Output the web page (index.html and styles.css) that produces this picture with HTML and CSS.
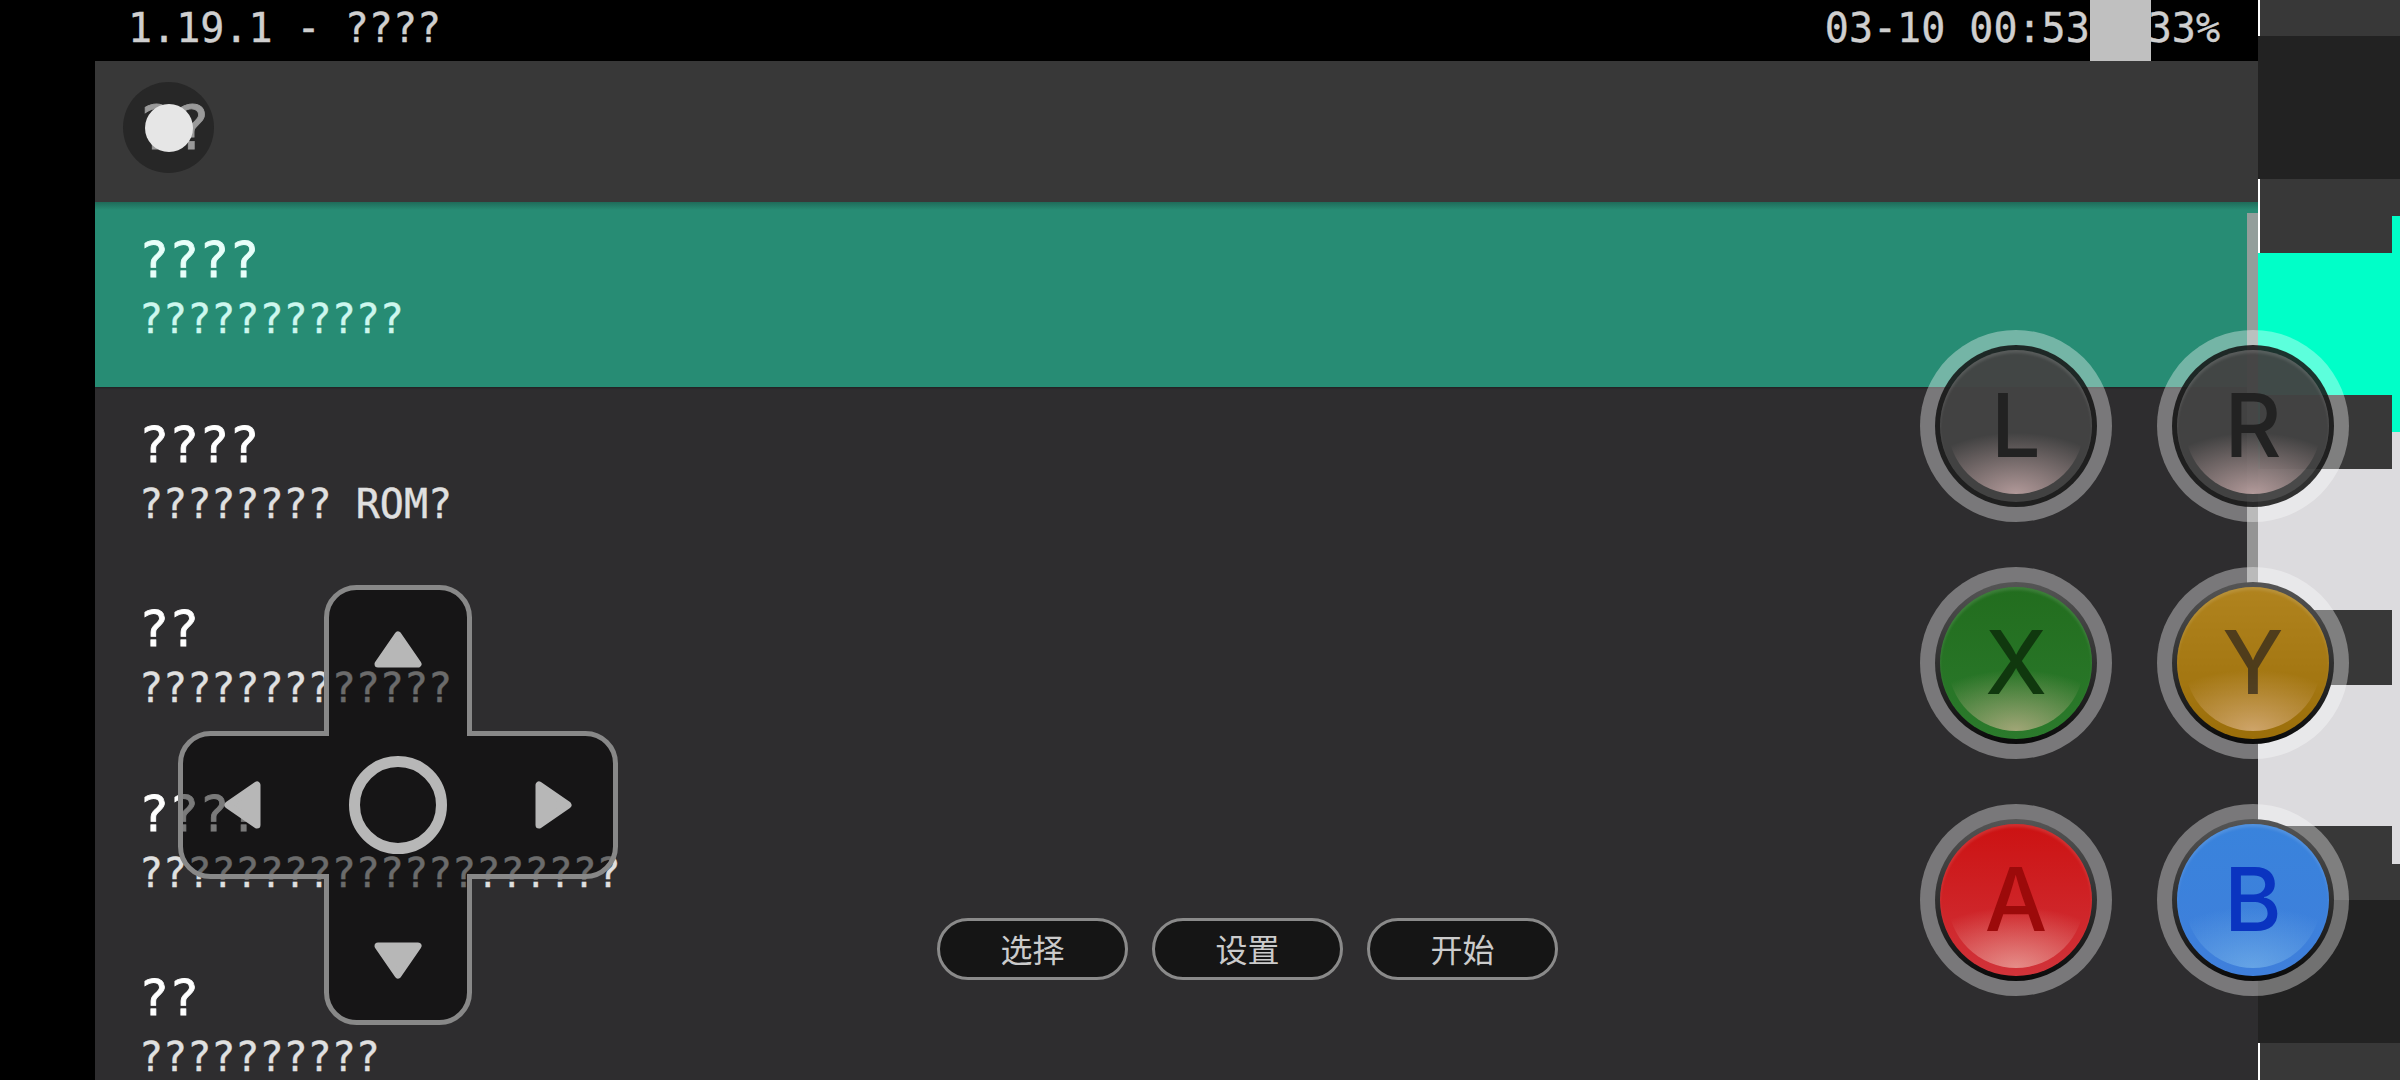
FILE: index.html
```html
<!DOCTYPE html>
<html lang="zh-CN">
<head>
    <meta charset="UTF-8">
    <meta name="viewport" content="width=device-width, initial-scale=1.0">
    <title>1.19.1</title>
    <link rel="stylesheet" href="styles.css">
</head>
<body>

<div class="screen">
    <div class="gutter"></div>

    <div class="app">
        <div class="status-bar">
            <span class="status-text">1.19.1 - ????</span>
            <div class="status-right">
                <span class="status-text">03-10 00:53</span>
                <div class="status-block"></div>
                <span class="status-text status-battery">33%</span>
            </div>
        </div>

        <div class="app-header">
            <span class="header-title">??</span>
            <div class="menu-button"><div class="menu-dot"></div></div>
        </div>

        <div class="menu-list">
            <div class="menu-item active">
                <div class="item-title">????</div>
                <div class="item-sub">???????????</div>
            </div>
            <div class="menu-item">
                <div class="item-title">????</div>
                <div class="item-sub">???????? ROM?</div>
            </div>
            <div class="menu-item">
                <div class="item-title">??</div>
                <div class="item-sub">?????????????</div>
            </div>
            <div class="menu-item">
                <div class="item-title">????</div>
                <div class="item-sub">????????????????????</div>
            </div>
            <div class="menu-item">
                <div class="item-title">??</div>
                <div class="item-sub">??????????</div>
            </div>
        </div>
    </div>

    <div class="strip">
        <div class="strip-main">
            <div class="b-mid line-white h36"></div>
            <div class="b-dark h143"></div>
            <div class="b-mid line-white h74"></div>
            <div class="b-cyan h142"></div>
            <div class="b-mid line-cyan h74"></div>
            <div class="b-light h141"></div>
            <div class="b-mid line-light h75"></div>
            <div class="b-light h141"></div>
            <div class="b-mid line-white h74"></div>
            <div class="b-dark h143"></div>
            <div class="b-mid line-white h37"></div>
        </div>
        <div class="strip-edge">
            <div class="b-mid h36"></div>
            <div class="b-dark h143"></div>
            <div class="b-mid h37"></div>
            <div class="b-cyan h216"></div>
            <div class="b-light h432"></div>
            <div class="b-mid h36"></div>
            <div class="b-dark h143"></div>
            <div class="b-mid h37"></div>
        </div>
    </div>
</div>

<div class="scrollbar"></div>

<svg class="dpad" width="446" height="446" viewBox="0 0 446 446">
    <path class="dpad-body" d="M151.5 151.5V35.5a30 30 0 0 1 30-30h83a30 30 0 0 1 30 30V151.5H410.5a30 30 0 0 1 30 30v83a30 30 0 0 1-30 30H294.5V410.5a30 30 0 0 1-30 30h-83a30 30 0 0 1-30-30V294.5H35.5a30 30 0 0 1-30-30v-83a30 30 0 0 1 30-30Z"/>
    <polygon class="dpad-arrow" points="223,53 243,82 203,82"/>
    <polygon class="dpad-arrow" points="223,393 243,364 203,364"/>
    <polygon class="dpad-arrow" points="53,223 82,203 82,243"/>
    <polygon class="dpad-arrow" points="393,223 364,203 364,243"/>
    <circle class="dpad-center" cx="223" cy="223" r="43.5"/>
</svg>

<div class="pills">
    <div class="pill">选择</div>
    <div class="pill">设置</div>
    <div class="pill">开始</div>
</div>

<div class="face-buttons">
    <div class="pad-btn btn-l"><div class="rim"><div class="face"><span>L</span></div></div></div>
    <div class="pad-btn btn-r"><div class="rim"><div class="face"><span>R</span></div></div></div>
    <div class="pad-btn btn-x"><div class="rim"><div class="face"><span>X</span></div></div></div>
    <div class="pad-btn btn-y"><div class="rim"><div class="face"><span>Y</span></div></div></div>
    <div class="pad-btn btn-a"><div class="rim"><div class="face"><span>A</span></div></div></div>
    <div class="pad-btn btn-b"><div class="rim"><div class="face"><span>B</span></div></div></div>
</div>

</body>
</html>
```
FILE: styles.css
```css
:root {
    --mid: #383838;
    --dark: #222222;
    --list: #2e2d2f;
    --teal: #278c74;
    --cyan: #00ffc8;
    --light: #dcdbde;
}

body {
    margin: 0;
    width: 2400px;
    height: 1080px;
    overflow: hidden;
    position: relative;
    background-color: #000;
    font-family: "DejaVu Sans Mono", "Liberation Mono", monospace;
}

.screen {
    display: flex;
    height: 1080px;
}

.gutter {
    width: 95px;
}

.app {
    width: 2163px;
    display: flex;
    flex-direction: column;
    background-color: var(--list);
}

.status-bar {
    height: 61px;
    padding: 0 38px 0 33px;
    display: flex;
    justify-content: space-between;
    align-items: center;
    background-color: #000;
    color: #cfcfcf;
    font-size: 40px;
}

.status-text {
    line-height: 50px;
    margin-bottom: 6px;
    -webkit-text-stroke: .4px #cfcfcf;
}

.status-right {
    display: flex;
    align-items: center;
    height: 61px;
}

.status-block {
    width: 61px;
    height: 61px;
    background-color: #c0c0c0;
    position: relative;
    z-index: 1;
}

.status-battery {
    margin-left: -3px;
}

.app-header {
    height: 141px;
    padding-left: 43px;
    background-color: var(--mid);
    position: relative;
    color: #9a9a9a;
    font-size: 60px;
    line-height: 134px;
}

.header-title {
    position: relative;
    z-index: 1;
    -webkit-text-stroke: .8px #9a9a9a;
}

.menu-button {
    position: absolute;
    left: 28px;
    top: 21px;
    width: 91px;
    height: 91px;
    border-radius: 50%;
    background-color: #272727;
    display: flex;
    align-items: center;
    justify-content: center;
}

.menu-dot {
    width: 48px;
    height: 48px;
    border-radius: 50%;
    background-color: #e6e6e6;
    position: relative;
    z-index: 2;
}

.menu-list {
    flex: 1;
    overflow: hidden;
}

.menu-item {
    height: 184.5px;
    box-sizing: border-box;
    padding: 33px 0 0 44px;
    color: #fff;
}

.menu-item.active {
    background: linear-gradient(#1f6b59 0, var(--teal) 8px);
    box-shadow: 0 1px 2px rgba(0, 0, 0, .3);
    color: #e8fffa;
}

.item-title {
    font-size: 50px;
    line-height: 50px;
    -webkit-text-stroke: .8px currentColor;
}

.item-sub {
    margin-top: 14px;
    font-size: 40px;
    line-height: 40px;
    color: #e0e0e0;
    -webkit-text-stroke: .4px currentColor;
}

.active .item-sub {
    color: #cdf7ee;
}

.strip {
    width: 142px;
    display: flex;
}

.strip-main {
    width: 134px;
}

.strip-edge {
    width: 8px;
}

.b-mid { background-color: var(--mid); }
.b-dark { background-color: var(--dark); }
.b-cyan { background-color: var(--cyan); }
.b-light { background-color: var(--light); }

.line-white { border-left: 2px solid #fff; }
.line-cyan { border-left: 2px solid var(--cyan); }
.line-light { border-left: 2px solid var(--light); }

.h36 { height: 36px; }
.h37 { height: 37px; }
.h74 { height: 74px; }
.h75 { height: 75px; }
.h141 { height: 141px; }
.h142 { height: 142px; }
.h143 { height: 143px; }
.h216 { height: 216px; }
.h432 { height: 432px; }

.scrollbar {
    position: absolute;
    left: 2247px;
    top: 213px;
    width: 11px;
    height: 499px;
    background-color: rgba(160, 160, 160, .9);
}

.dpad {
    position: absolute;
    left: 175px;
    top: 582px;
}

.dpad-body {
    fill: rgba(0, 0, 0, .52);
    stroke: #888;
    stroke-width: 5;
}

.dpad-arrow {
    fill: #b7b7b7;
    stroke: #b7b7b7;
    stroke-width: 7;
    stroke-linejoin: round;
}

.dpad-center {
    fill: none;
    stroke: #b7b7b7;
    stroke-width: 11;
}

.pills {
    position: absolute;
    left: 937px;
    top: 918px;
    display: flex;
    gap: 24px;
}

.pill {
    width: 191px;
    height: 62px;
    box-sizing: border-box;
    border: 3px solid #8a8a8a;
    border-radius: 31px;
    background-color: #151515;
    color: #cbcbcb;
    font-family: "Noto Sans CJK SC", sans-serif;
    font-size: 32px;
    line-height: 54px;
    text-align: center;
}

.face-buttons {
    position: absolute;
    left: 1920px;
    top: 330px;
    display: grid;
    grid-template-columns: 192px 192px;
    grid-auto-rows: 192px;
    column-gap: 45px;
    row-gap: 45px;
}

.pad-btn {
    box-sizing: border-box;
    padding: 15px;
    border-radius: 50%;
    background-color: rgba(255, 255, 255, .36);
}

.rim {
    height: 100%;
    box-sizing: border-box;
    padding: 5px;
    border-radius: 50%;
    background: linear-gradient(#555, #0a0a0a);
}

.btn-l .rim, .btn-r .rim {
    background: rgba(15, 15, 15, .85);
}

.face {
    height: 100%;
    border-radius: 50%;
    position: relative;
    display: flex;
    align-items: center;
    justify-content: center;
    box-shadow: inset 0 3px 3px rgba(255, 255, 255, .12);
    font-family: Inter, "Liberation Sans", sans-serif;
    font-size: 88px;
    font-weight: 500;
    line-height: 1;
}

.face span {
    position: relative;
    top: -1px;
}

.face::before {
    content: "";
    position: absolute;
    inset: 8px;
    border-radius: 50%;
    background: radial-gradient(ellipse 80% 45% at 50% 100%, var(--glow) 0, transparent 100%);
}

.btn-l .face, .btn-r .face {
    background-color: rgba(90, 90, 90, .6);
    color: #222;
    --glow: rgba(225, 190, 190, .7);
}

.btn-x .face {
    background: linear-gradient(#226d1e, #2b7a2c);
    color: #10380e;
    --glow: rgba(225, 190, 160, .65);
}

.btn-y .face {
    background-color: rgba(216, 152, 9, .7);
    color: rgba(50, 40, 30, .75);
    --glow: rgba(240, 200, 170, .6);
}

.btn-a .face {
    background: linear-gradient(#cc1212, #d1333a);
    color: #9c0a0a;
    --glow: rgba(240, 190, 180, .65);
}

.btn-b .face {
    background: linear-gradient(#3983dc, #3f7fdb);
    color: #0a34c0;
    --glow: rgba(140, 200, 240, .5);
}
```
